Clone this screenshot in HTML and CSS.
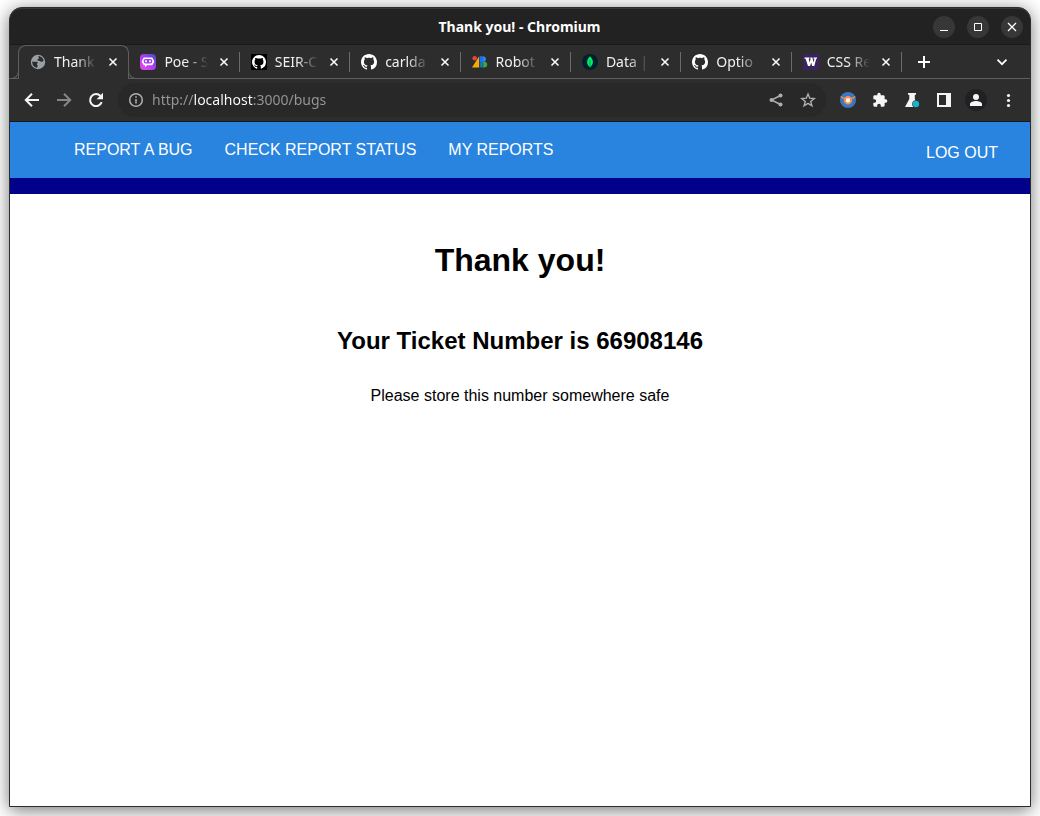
FILE: index.html
```html
<!DOCTYPE html>
<html lang="en">
<head>
<meta charset="utf-8">
<meta name="viewport" content="width=device-width, initial-scale=1">
<title>Thank you!</title>
<link rel="stylesheet" href="styles.css">
</head>
<body>
<svg class="sprite" aria-hidden="true">
  <symbol id="close" viewBox="0 0 16 16"><path d="M4.500 4.500l7 7M11.500 4.500l-7 7" fill="none" stroke="currentColor" stroke-width="1.500"/></symbol>
  <symbol id="github" viewBox="0 0 16 16"><path fill="currentColor" d="M8 0C3.58 0 0 3.58 0 8c0 3.54 2.29 6.53 5.47 7.59.4.07.55-.17.55-.38 0-.19-.01-.82-.01-1.49-2.01.37-2.53-.49-2.69-.94-.09-.23-.48-.94-.82-1.13-.28-.15-.68-.52-.01-.53.63-.01 1.08.58 1.23.82.72 1.21 1.87.87 2.33.66.07-.52.28-.87.51-1.07-1.78-.2-3.64-.89-3.64-3.95 0-.87.31-1.59.82-2.15-.08-.2-.36-1.02.08-2.12 0 0 .67-.21 2.2.82.64-.18 1.32-.27 2-.27s1.36.09 2 .27c1.53-1.04 2.2-.82 2.2-.82.44 1.1.16 1.92.08 2.12.51.56.82 1.27.82 2.15 0 3.07-1.87 3.75-3.65 3.95.29.25.54.73.54 1.48 0 1.07-.01 1.93-.01 2.2 0 .21.15.46.55.38A8.01 8.01 0 0 0 16 8c0-4.42-3.58-8-8-8z"/></symbol>
</svg>
<div class="window">
  <header class="titlebar">
    <span class="window-title">Thank you! - Chromium</span>
    <div class="window-controls">
      <button class="round" aria-label="Minimize"><svg viewBox="0 0 22 22"><path d="M7 14.500h8" stroke="currentColor"/></svg></button>
      <button class="round" aria-label="Maximize"><svg viewBox="0 0 22 22"><path d="M7.500 7.500h7v7h-7z" fill="none" stroke="currentColor"/></svg></button>
      <button class="round" aria-label="Close window"><svg viewBox="0 0 22 22"><path d="M7 7l8 8M15 7l-8 8" stroke="currentColor" stroke-width="1.300"/></svg></button>
    </div>
  </header>

  <div class="tabstrip">
    <div class="tabs">
      <div class="tab active">
        <svg class="favicon" viewBox="0 0 16 16"><circle cx="8" cy="8" r="7.200" fill="#9aa0a6"/><path d="M2.300 7.500c1.700.2 3 .4 4.200.3 1.200-.1 1.500 1 .8 1.700-.8.700 0 1.300.3 2.100.2.700-.2 1.700-.7 2.200C4.200 13.300 1.900 11 2.300 7.500zM8.500 2.100c2.300.3 4.400 1.900 5.100 4.100-.8 1.700-2 1.900-3.100 1.200-.9-.7-1.800-.3-2.800-.9-.8-.6-.2-1.500.6-1.600.9-.2 1-.8.5-1.300-.5-.4-.7-.9-.3-1.500z" fill="#2d2d2d"/></svg>
        <button class="tab-name">Thank</button>
        <button class="tab-close" aria-label="Close Thank you!"><svg><use href="#close"/></svg></button>
      </div>
      <div class="tab">
        <svg class="favicon" viewBox="0 0 16 16"><defs><linearGradient id="poe" x1="0" y1="1" x2="1" y2="0"><stop offset="0" stop-color="#f44bea"/><stop offset=".5" stop-color="#b13cf6"/><stop offset="1" stop-color="#3f4fc0"/></linearGradient></defs><rect width="16" height="16" rx="4" fill="url(#poe)"/><path d="M3.700 3.500h8.600l.9 2c1.300.5 1.300 3.500 0 4l-.9 1.700H7l-2 2v-2H3.700l-.9-1.700c-1.300-.5-1.300-3.500 0-4z" fill="#fff"/><rect x="3.700" y="5" width="8.600" height="4.600" rx="1.800" fill="#a33cf3"/><path d="M6 6.300v2M10 6.300v2" stroke="#fff" stroke-width="1.700"/></svg>
        <button class="tab-name">Poe - S</button>
        <button class="tab-close" aria-label="Close Poe"><svg><use href="#close"/></svg></button>
      </div>
      <div class="tab">
        <svg class="favicon white" viewBox="0 0 16 16"><rect width="16" height="16" fill="#000"/><use href="#github" x="1" y="1" width="14" height="14"/></svg>
        <button class="tab-name">SEIR-C</button>
        <button class="tab-close" aria-label="Close SEIR"><svg><use href="#close"/></svg></button>
      </div>
      <div class="tab">
        <svg class="favicon white" viewBox="0 0 16 16"><use href="#github"/></svg>
        <button class="tab-name">carlda</button>
        <button class="tab-close" aria-label="Close carlda"><svg><use href="#close"/></svg></button>
      </div>
      <div class="tab">
        <svg class="favicon" viewBox="0 0 16 16"><circle cx="2.700" cy="4.200" r="2.300" fill="#ea4335"/><path d="M0 13.500L7 2.500v11z" fill="#f9ab00"/><path d="M7.500 2.200h3.800a3 3 0 0 1 0 5.900H7.500z" fill="#1a73e8"/><path d="M7.500 7.800h4v5.700h-4z" fill="#1967d2"/><path d="M11.500 2.200a3 3 0 0 1 0 5.800z" fill="#4285f4"/><circle cx="12.300" cy="10.600" r="2.900" fill="#34a853"/><path d="M11.500 7.900v5.500a2.900 2.900 0 0 1 0-5.500z" fill="#188038"/></svg>
        <button class="tab-name">Robot</button>
        <button class="tab-close" aria-label="Close Roboto"><svg><use href="#close"/></svg></button>
      </div>
      <div class="tab">
        <svg class="favicon" viewBox="0 0 16 16"><circle cx="8" cy="8" r="8" fill="#001e2b"/><path d="M8 2.300c2 2 3 4 2.900 6-.1 2-1.200 3.600-2.500 4.400L8 13.900l-.4-1.200C6.300 11.900 5.200 10.300 5.100 8.300 5 6.300 6 4.300 8 2.300z" fill="#00ed64"/><path d="M8 6v7" stroke="#00a35c"/></svg>
        <button class="tab-name">Data |</button>
        <button class="tab-close" aria-label="Close Data"><svg><use href="#close"/></svg></button>
      </div>
      <div class="tab">
        <svg class="favicon white" viewBox="0 0 16 16"><use href="#github"/></svg>
        <button class="tab-name">Optio</button>
        <button class="tab-close" aria-label="Close Options"><svg><use href="#close"/></svg></button>
      </div>
      <div class="tab">
        <svg class="favicon" viewBox="0 0 16 16"><rect width="16" height="16" fill="#3b2360"/><path d="M1.500 3.500h5v1.300H5.700l.9 3.700 1-3.500-.4-1.500h2.200l1.200 5 .9-3.700h-1V3.500h3.500v1.300h-.8L11.300 12H9.200L8.200 8.500 7.100 12H5L2.600 4.800H1.500z" fill="#fff"/></svg>
        <button class="tab-name">CSS Re</button>
        <button class="tab-close" aria-label="Close CSS"><svg><use href="#close"/></svg></button>
      </div>
    </div>
    <button class="new-tab" aria-label="New tab"><svg viewBox="0 0 16 16"><path d="M8 2v12M2 8h12" stroke="currentColor" stroke-width="2"/></svg></button>
    <button class="search-tabs" aria-label="Search tabs"><svg viewBox="0 0 16 16"><path d="M3.500 5.700L8 10.200l4.500-4.500" fill="none" stroke="currentColor" stroke-width="1.700"/></svg></button>
  </div>

  <div class="toolbar">
    <div class="tools">
      <button class="tool" aria-label="Back"><svg viewBox="0 0 16 16"><path d="M15 8H2.500M8 1.800L1.800 8 8 14.200" fill="none" stroke="currentColor" stroke-width="2"/></svg></button>
      <button class="tool dim" aria-label="Forward"><svg viewBox="0 0 16 16"><path d="M1 8h12.500M8 1.800L14.200 8 8 14.200" fill="none" stroke="currentColor" stroke-width="2"/></svg></button>
      <button class="tool" aria-label="Reload"><svg viewBox="0 0 16 16"><path d="M13.700 10.200A6 6 0 1 1 12.500 4" fill="none" stroke="currentColor" stroke-width="2"/><path d="M15 .8v6.400H8.600z" fill="currentColor"/></svg></button>
    </div>
    <div class="omnibox">
      <button class="tool grey" aria-label="Site information"><svg viewBox="0 0 16 16"><circle cx="8" cy="8" r="6.300" fill="none" stroke="currentColor" stroke-width="1.500"/><path d="M8 7v4.500M8 4.200v1.600" stroke="currentColor" stroke-width="1.500"/></svg></button>
      <input class="url" type="text" aria-label="Address" value="http://localhost:3000/bugs">
      <button class="tool grey" aria-label="Share"><svg viewBox="0 0 16 16"><path d="M12.500 3.500L3.500 8l9 4.500" fill="none" stroke="currentColor" stroke-width="1.400"/><circle cx="12.500" cy="3.500" r="2" fill="currentColor"/><circle cx="3.500" cy="8" r="2" fill="currentColor"/><circle cx="12.500" cy="12.500" r="2" fill="currentColor"/></svg></button>
      <button class="tool grey" aria-label="Bookmark"><svg viewBox="0 0 16 16"><path d="M8 2l1.700 4.200 4.500.3-3.500 2.900 1.200 4.400L8 11.400l-3.900 2.400 1.200-4.400-3.500-2.900 4.500-.3z" fill="none" stroke="currentColor" stroke-width="1.400"/></svg></button>
    </div>
    <div class="tools">
      <button class="tool" aria-label="Extension"><svg viewBox="0 0 16 16"><circle cx="8" cy="8" r="8" fill="#3b78c3"/><path d="M1 4.200c1.200 2.300 2.600 2.500 4.200 2 1.500-1.800 4.100-1.800 5.600 0 1.600.5 3 .3 4.200-2" fill="none" stroke="#fb8c4a" stroke-width="1.400"/><circle cx="8" cy="8.200" r="3.200" fill="#fff" stroke="#fb8c4a" stroke-width="2"/></svg></button>
      <button class="tool" aria-label="Extensions"><svg viewBox="0 0 24 24"><path fill="currentColor" d="M20.500 11H19V7c0-1.100-.9-2-2-2h-4V3.500a2.500 2.500 0 0 0-5 0V5H4c-1.100 0-1.990.9-1.990 2v3.800H3.500c1.490 0 2.700 1.210 2.700 2.700s-1.210 2.700-2.700 2.700H2V20c0 1.100.9 2 2 2h3.800v-1.500c0-1.490 1.210-2.700 2.700-2.700 1.490 0 2.700 1.210 2.700 2.700V22H17c1.100 0 2-.9 2-2v-4h1.500a2.500 2.500 0 0 0 0-5z"/></svg></button>
      <button class="tool" aria-label="Experiments"><svg viewBox="0 0 16 16"><path d="M4 1h8v1.800h-1.200V7l4 8H1l4.300-8V2.800H4z" fill="currentColor"/><circle cx="12" cy="12" r="3.800" fill="#2d2d2d"/><circle cx="12" cy="12" r="3.200" fill="#12b5cb"/></svg></button>
      <button class="tool" aria-label="Side panel"><svg viewBox="0 0 16 16"><path d="M1 1h14v14H1zM3 3v10h7V3z" fill="currentColor" fill-rule="evenodd"/></svg></button>
      <button class="tool profile" aria-label="Profile"><svg viewBox="0 0 16 16"><circle cx="8" cy="5" r="3" fill="currentColor"/><path d="M2 14v-2c0-2 3.500-3 6-3s6 1 6 3v2z" fill="currentColor"/></svg></button>
      <button class="tool" aria-label="Menu"><svg viewBox="0 0 16 16"><circle cx="8.500" cy="3.500" r="1.600" fill="currentColor"/><circle cx="8.500" cy="8.500" r="1.600" fill="currentColor"/><circle cx="8.500" cy="13.500" r="1.600" fill="currentColor"/></svg></button>
    </div>
  </div>

  <div class="page">
    <nav class="nav">
      <div class="nav-links">
        <a href="#report">REPORT A BUG</a>
        <a href="#status">CHECK REPORT STATUS</a>
        <a href="#reports">MY REPORTS</a>
      </div>
      <a class="logout" href="#logout">LOG OUT</a>
    </nav>
    <main class="content">
      <h1>Thank you!</h1>
      <h2>Your Ticket Number is 66908146</h2>
      <p>Please store this number somewhere safe</p>
    </main>
  </div>
</div>
</body>
</html>
```
FILE: styles.css
```css
* { box-sizing: border-box; }

body {
  margin: 0;
  min-height: 100vh;
  padding: 7px 9px 9px;
  display: flex;
  background: #fff;
  font-family: "Noto Sans", "Open Sans", sans-serif;
  overflow: hidden;
}

button {
  padding: 0;
  border: 0;
  background: none;
  color: inherit;
  font: inherit;
}

button svg { display: block; }

.sprite { position: absolute; width: 0; height: 0; }

.window {
  flex: 1;
  min-width: 0;
  display: flex;
  flex-direction: column;
  border: 1px solid #2d2d2d;
  border-radius: 13px 13px 0 0;
  background: #2d2d2d;
  box-shadow: 0 3px 18px rgba(0, 0, 0, .55);
  color: #fff;
}

.titlebar {
  display: grid;
  grid-template-columns: 1fr auto 1fr;
  align-items: center;
  height: 37px;
  padding-right: 7px;
  border-top: 1px solid #373737;
  border-bottom: 1px solid #191919;
  border-radius: 12px 12px 0 0;
  background: #222;
}

.window-title {
  grid-column: 2;
  padding-left: 6px;
  font-size: 14px;
  font-weight: 700;
}

.window-controls {
  display: flex;
  justify-content: flex-end;
  gap: 12px;
}

.round {
  width: 22px;
  height: 22px;
  border-radius: 50%;
  background: #373737;
}

.tabstrip {
  display: flex;
  height: 34px;
  padding: 0 20px 0 8px;
  border-bottom: 1px solid #5f5f5f;
}

.tabs {
  flex: 1;
  min-width: 0;
  display: flex;
}

.tab {
  position: relative;
  flex: 1 1 0;
  min-width: 0;
  height: 34px;
  padding: 0 8px 0 11px;
  display: flex;
  align-items: center;
}

.tab:not(.active)::after {
  content: "";
  position: absolute;
  top: 7px;
  right: 0;
  width: 1px;
  height: 20px;
  background: #6b6b6b;
}

.active {
  flex-basis: 2px;
  border: solid #5f5f5f;
  border-width: 1px 1px 0;
  border-radius: 8px 8px 0 0;
  padding: 0 7px 1px 11px;
  background: #2d2d2d;
}

.active::before,
.active::after {
  content: "";
  position: absolute;
  bottom: 0;
  width: 9px;
  height: 9px;
  border: solid #5f5f5f;
  background: #2d2d2d;
}

.active::before {
  right: 100%;
  border-width: 0 1px 1px 0;
  border-bottom-right-radius: 8px;
}

.active::after {
  left: 100%;
  border-width: 0 0 1px 1px;
  border-bottom-left-radius: 8px;
}

.favicon {
  flex: none;
  width: 16px;
  height: 16px;
}

.white { color: #fff; }

.tab-name {
  flex: 1;
  min-width: 0;
  margin: 0 8px;
  overflow: hidden;
  text-align: left;
  white-space: nowrap;
  font-size: 14px;
  line-height: 20px;
  color: #f0f0f0;
  mask-image: linear-gradient(to right, #000 50%, transparent);
}

.tab-close svg { width: 16px; height: 16px; }

.new-tab,
.search-tabs {
  width: 16px;
}

.new-tab { margin-left: 14px; }
.search-tabs { margin-left: 62px; }

.toolbar {
  display: flex;
  align-items: center;
  height: 43px;
  padding: 0 14px;
  border-bottom: 1px solid #191919;
}

.tools { display: flex; gap: 16px; }

.tool {
  flex: none;
  width: 16px;
  height: 16px;
  color: #f5f5f5;
}

.dim { color: #868686; }
.grey { color: #b0b0b0; }

.profile {
  border-radius: 50%;
  background: #202124;
  box-shadow: 0 0 0 3px #202124;
}

.omnibox {
  flex: 1;
  min-width: 0;
  display: flex;
  align-items: center;
  gap: 16px;
  height: 34px;
  margin: 0 14px;
  padding: 0 10px;
  border-radius: 17px;
  background: #282828;
}

.url {
  flex: 1;
  min-width: 0;
  margin-left: -8px;
  padding: 0;
  border: 0;
  outline: 0;
  font: 14px/20px "Noto Sans", sans-serif;
  color: transparent;
  background: linear-gradient(to right, #989898 42px, #fff 42px 101px, #989898 101px);
  background-clip: text;
  -webkit-background-clip: text;
}

.page {
  flex: 1;
  background: #fff;
  color: #000;
  font-family: "Liberation Sans", Arial, sans-serif;
  font-size: 16px;
}

.nav {
  display: flex;
  align-items: center;
  justify-content: space-between;
  height: 72px;
  padding: 0 32px 0 64px;
  border-bottom: 16px solid #00008b;
  background: #2884de;
}

.nav a { color: #fff; text-decoration: none; }

.nav-links { display: flex; gap: 32px; }

.logout { padding-top: 6px; }

.content { text-align: center; }

h1 {
  margin: 48px 0 0;
  font-size: 32px;
  line-height: 37px;
}

h2 {
  margin: 48px 0 0;
  font-size: 24px;
  line-height: 28px;
}

p {
  margin: 32px 0 0;
  line-height: 18px;
}
```
